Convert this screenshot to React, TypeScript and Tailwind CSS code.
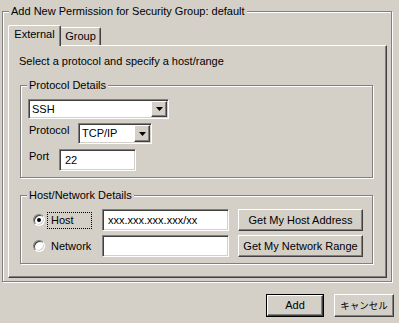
import React from "react";

const sunken =
  "border border-t-[#808080] border-l-[#808080] border-b-white border-r-white shadow-[inset_1px_1px_0_#404040,inset_-1px_-1px_0_#d4d0c8]";
const raised =
  "border border-t-white border-l-white border-b-[#404040] border-r-[#404040] shadow-[inset_-1px_-1px_0_#808080]";
const etched = "border border-[#808080] shadow-[inset_1px_1px_0_#fff,1px_1px_0_#fff]";

function GroupBox({ title, className, children }: { title: string; className?: string; children?: React.ReactNode }) {
  return (
    <div className={`relative ${etched} ${className ?? ""}`}>
      <span className="absolute -top-[7px] left-[6px] px-[2px] bg-[#d4d0c8] leading-[13px] whitespace-nowrap">
        {title}
      </span>
      {children}
    </div>
  );
}

function Arrow() {
  return (
    <svg width="7" height="4" viewBox="0 0 7 4">
      <path d="M0 0h7L3.5 4z" fill="#000" />
    </svg>
  );
}

function Combo({ value, className }: { value: string; className?: string }) {
  return (
    <div className={`flex bg-white ${sunken} ${className ?? ""}`}>
      <div className="flex-1 flex items-center pl-[3px] leading-[13px]">{value}</div>
      <div className={`w-[16px] m-[1px] bg-[#d4d0c8] flex items-center justify-center ${raised}`}>
        <Arrow />
      </div>
    </div>
  );
}

function Field({ value, className }: { value?: string; className?: string }) {
  return (
    <div className={`flex items-center bg-white pl-[5px] leading-[13px] ${sunken} ${className ?? ""}`}>{value}</div>
  );
}

function Button({ label, className }: { label: string; className?: string }) {
  return (
    <button className={`flex items-center justify-center bg-[#d4d0c8] leading-[13px] ${raised} ${className ?? ""}`}>
      {label}
    </button>
  );
}

function Radio({ checked }: { checked?: boolean }) {
  return (
    <span className="w-[12px] h-[12px] rounded-full bg-white flex items-center justify-center border border-t-[#808080] border-l-[#808080] border-b-white border-r-white shadow-[inset_1px_1px_0_#404040,inset_-1px_-1px_0_#d4d0c8]">
      {checked && <span className="w-[4px] h-[4px] rounded-full bg-black" />}
    </span>
  );
}

export default function App() {
  return (
    <div className="w-[399px] h-[323px] overflow-hidden bg-[#d4d0c8] text-[11px] text-black font-['Liberation_Sans','Noto_Sans_CJK_JP',sans-serif]">
      <div className="pt-[11px] pl-[2px]">
        <GroupBox title="Add New Permission for Security Group: default" className="w-[390px] h-[271px] pt-[13px] pl-[5px]">
          <div className="relative z-10 flex items-end h-[20px]">
            <div className="w-[53px] h-[21px] -mb-[1px] pt-[2px] bg-[#d4d0c8] border-t border-l border-r border-t-white border-l-white border-r-[#404040] shadow-[inset_-1px_0_0_#808080] rounded-t-[2px] text-center leading-[13px]">
              External
            </div>
            <div className="w-[40px] h-[18px] pt-[2px] border-t border-r border-t-white border-r-[#404040] shadow-[inset_-1px_0_0_#808080] rounded-tr-[2px] text-center leading-[13px]">
              Group
            </div>
          </div>
          <div className="w-[379px] h-[233px] border border-t-white border-l-white border-b-[#404040] border-r-[#404040] shadow-[inset_-1px_-1px_0_#808080] pt-[9px]">
            <div className="pl-[10px] leading-[13px]">Select a protocol and specify a host/range</div>
            <GroupBox title="Protocol Details" className="mt-[17px] ml-[11px] w-[353px] h-[93px] pt-[13px] pl-[7px]">
              <Combo value="SSH" className="w-[141px] h-[20px]" />
              <div className="flex items-start mt-[4px] pl-[1px]">
                <span className="w-[49px] leading-[13px] pt-[1px]">Protocol</span>
                <Combo value="TCP/IP" className="w-[74px] h-[21px]" />
              </div>
              <div className="flex items-start mt-[5px] pl-[1px]">
                <span className="w-[30px] leading-[13px] pt-[1px]">Port</span>
                <Field value="22" className="w-[77px] h-[22px]" />
              </div>
            </GroupBox>
            <GroupBox title="Host/Network Details" className="mt-[17px] ml-[11px] w-[353px] h-[69px] pt-[13px] pl-[12px]">
              <div className="flex items-center h-[22px]">
                <Radio checked />
                <span className="ml-[2px] w-[45px] h-[17px] pl-[3px] flex items-center border border-dotted border-black leading-[13px]">
                  Host
                </span>
                <Field value="xxx.xxx.xxx.xxx/xx" className="ml-[10px] w-[127px] h-[22px]" />
                <Button label="Get My Host Address" className="ml-[9px] w-[125px] h-[22px]" />
              </div>
              <div className="flex items-center h-[22px] mt-[4px]">
                <Radio />
                <span className="ml-[2px] w-[45px] h-[17px] pl-[4px] flex items-center leading-[13px]">Network</span>
                <Field className="ml-[10px] w-[127px] h-[22px]" />
                <Button label="Get My Network Range" className="ml-[9px] w-[125px] h-[22px]" />
              </div>
            </GroupBox>
          </div>
        </GroupBox>
      </div>
      <div className="flex justify-end gap-[10px] mt-[12px] pr-[5px]">
        <div className="border border-black">
          <Button label="Add" className="w-[56px] h-[21px]" />
        </div>
        <Button label="キャンセル" className="w-[60px] h-[23px] text-[9.5px]" />
      </div>
    </div>
  );
}
